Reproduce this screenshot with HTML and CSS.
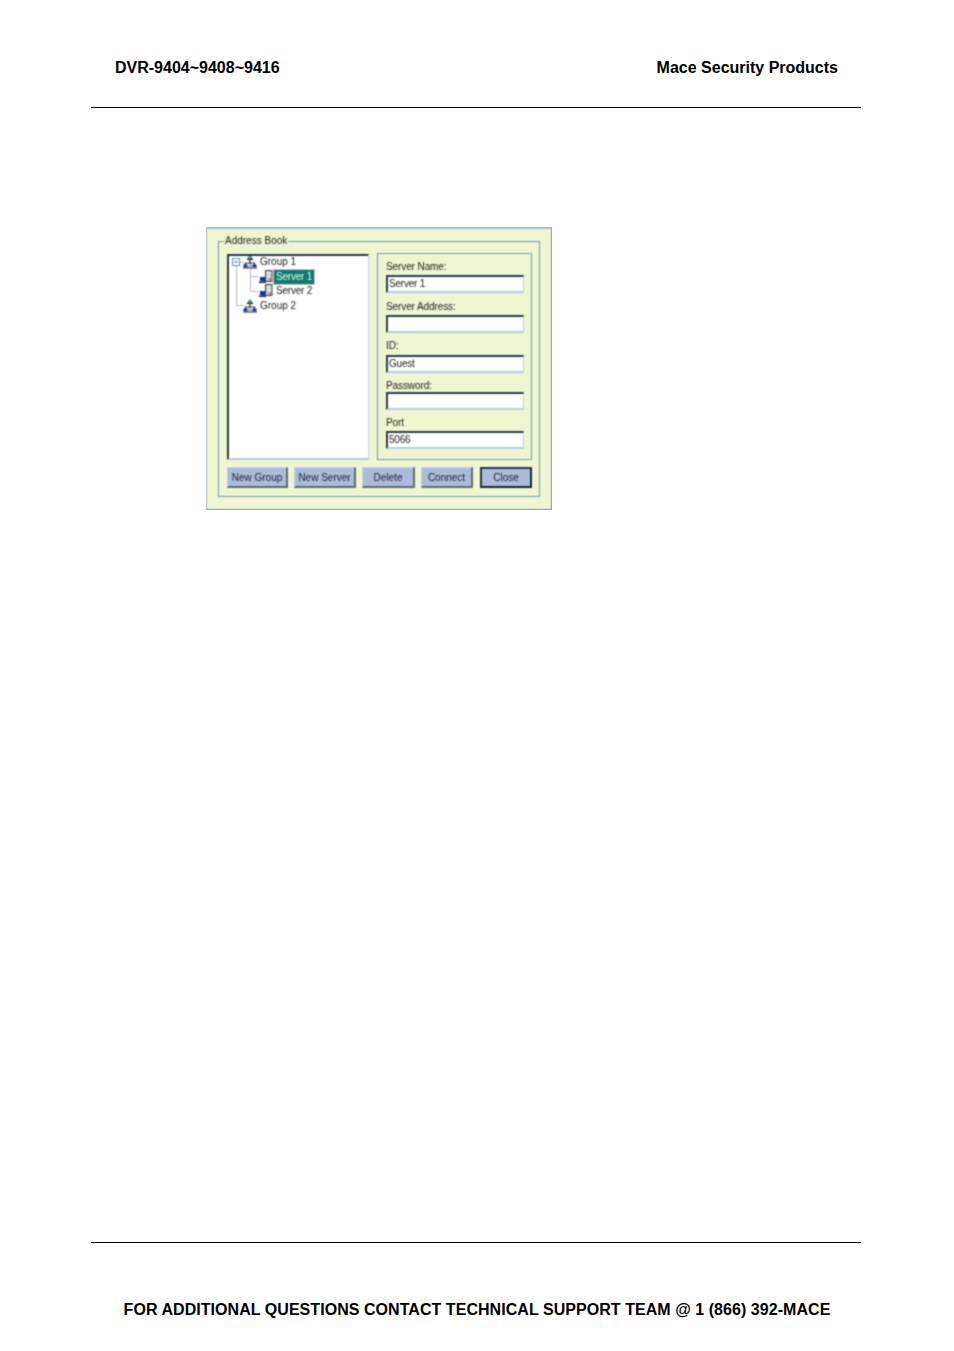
FILE: index.html
```html
<!DOCTYPE html>
<html lang="en">
<head>
<meta charset="utf-8">
<title>DVR-9404~9408~9416</title>
<link rel="stylesheet" href="styles.css">
</head>
<body>
<div class="page">
  <header class="head">
    <span>DVR-9404~9408~9416</span>
    <span>Mace Security Products</span>
  </header>
  <main class="content">
    <div class="dialog">
      <fieldset class="group">
        <legend class="legend">Address Book</legend>
        <div class="panes">
          <div class="tree">
            <svg class="lines" width="40" height="60" viewBox="0 0 40 60">
              <path d="M7.5 10V49.500H15M21.500 12V35.500H30M21.500 20.500H30M11 6.500H15" fill="none" stroke="#a4bbdc" stroke-width="1"/>
              <rect x="3.500" y="2.500" width="7" height="7" fill="#fff" stroke="#6a8cc0"/>
              <path d="M5 6H9" stroke="#3a5c90"/>
            </svg>
            <div class="row lvl1 first">
              <svg class="ico" viewBox="0 0 14 14"><use href="#net"/></svg><span class="lbl">Group 1</span>
            </div>
            <div class="row lvl2">
              <svg class="ico" viewBox="0 0 14 14"><use href="#srv"/></svg><span class="lbl sel">Server 1</span>
            </div>
            <div class="row lvl2">
              <svg class="ico" viewBox="0 0 14 14"><use href="#srv"/></svg><span class="lbl">Server 2</span>
            </div>
            <div class="row lvl1">
              <svg class="ico" viewBox="0 0 14 14"><use href="#net"/></svg><span class="lbl">Group 2</span>
            </div>
          </div>
          <div class="form">
            <label class="field f1">Server Name:<span class="input">Server 1</span></label>
            <label class="field f2">Server Address:<span class="input"></span></label>
            <label class="field f3">ID:<span class="input">Guest</span></label>
            <label class="field f4">Password:<span class="input"></span></label>
            <label class="field f5">Port<span class="input">5066</span></label>
          </div>
        </div>
        <div class="buttons">
          <button class="btn b1">New Group</button>
          <button class="btn b2">New Server</button>
          <button class="btn b3">Delete</button>
          <button class="btn b4">Connect</button>
          <button class="btn b5 default">Close</button>
        </div>
      </fieldset>
    </div>
  </main>
  <footer class="foot">FOR ADDITIONAL QUESTIONS CONTACT TECHNICAL SUPPORT TEAM @ 1 (866) 392-MACE</footer>
</div>
<svg class="defs" width="0" height="0">
  <defs>
    <filter id="soft" x="0" y="0" width="100%" height="100%" color-interpolation-filters="sRGB">
      <feConvolveMatrix order="3" kernelMatrix="1 2 1 2 6 2 1 2 1" divisor="18" preserveAlpha="true"/>
    </filter>
    <g id="net">
      <path d="M7 0L10.500 5H3.500Z" fill="#26303c"/>
      <rect x="6" y="1.500" width="2" height="2.500" fill="#35c0b0"/>
      <path d="M7 5V9M2.500 10V8H11.500V10" fill="none" stroke="#26303c" stroke-width="1.200"/>
      <rect x="0.500" y="9.500" width="4" height="3" fill="#1a2ab8"/>
      <rect x="5" y="9.500" width="4" height="3" fill="#aeb6c8"/>
      <rect x="9.500" y="9.500" width="4" height="3" fill="#1a2ab8"/>
      <rect x="0" y="12.500" width="14" height="1" fill="#26303c"/>
    </g>
    <g id="srv">
      <rect x="6.500" y="0.500" width="6.500" height="11" fill="#c4cad4" stroke="#3a4450" stroke-width="1"/>
      <rect x="8.500" y="2.500" width="3" height="1.500" fill="#f4f6fa"/>
      <rect x="8.500" y="5.500" width="3" height="1.500" fill="#f4f6fa"/>
      <rect x="10" y="8.500" width="2" height="2" fill="#c05a5a"/>
      <rect x="1" y="7" width="5" height="4.500" fill="#1a2ab8"/>
      <rect x="0" y="11.500" width="7" height="1.500" fill="#20283a"/>
    </g>
  </defs>
</svg>
</body>
</html>
```

FILE: styles.css
```css
html, body {
  margin: 0;
  padding: 0;
  background: #fff;
}
.page {
  width: 954px;
  height: 1351px;
  display: flex;
  flex-direction: column;
  font-family: "Liberation Sans", Arial, sans-serif;
  color: #000;
}
.head {
  margin-left: 91px;
  width: 770px;
  box-sizing: border-box;
  height: 108px;
  padding: 59px 23px 0 24px;
  display: flex;
  justify-content: space-between;
  font-size: 16px;
  line-height: 18px;
  font-weight: 700;
  border-bottom: 1px solid #000;
}
.content {
  flex: 1;
  padding: 119px 0 0 206px;
}
.foot {
  margin-left: 91px;
  width: 770px;
  box-sizing: border-box;
  height: 109px;
  border-top: 1px solid #000;
  padding: 58px 0 0 2px;
  text-align: center;
  font-size: 16px;
  line-height: 18px;
  font-weight: 700;
  letter-spacing: 0.05px;
}
.defs {
  position: absolute;
}
.dialog {
  width: 346px;
  height: 283px;
  box-sizing: border-box;
  background: #eef5d0;
  border: 1px solid #a4bbdc;
  border-top-width: 2px;
  border-bottom-color: #7f9ac4;
  border-right-color: #7f9ac4;
  padding: 6px 11px 0;
  filter: url(#soft);
  font-size: 10px;
  color: #5a5a5a;
}
.group {
  margin: 0;
  width: 322px;
  height: 262px;
  box-sizing: border-box;
  border: 1px solid #7496c8;
  padding: 6px 7px 0 8px;
  min-width: 0;
}
.legend {
  padding: 0 1px;
  margin-left: -3px;
  line-height: 12px;
  color: #222;
}
.panes {
  display: flex;
  justify-content: space-between;
  height: 207px;
}
.tree {
  position: relative;
  width: 142px;
  margin-top: 1px;
  box-sizing: border-box;
  background: #fff;
  border-top: 2px solid #2a3648;
  border-left: 2px solid #2a3648;
  border-right: 1px solid #c8d6ea;
  border-bottom: 2px solid #b8cae4;
}
.lines {
  position: absolute;
  left: 0;
  top: 0;
}
.row {
  position: relative;
  display: flex;
  align-items: center;
  height: 14.500px;
  gap: 1px;
}
.first {
  margin-top: -1px;
}
.lvl1 {
  padding-left: 14px;
}
.lvl2 {
  padding-left: 30px;
  letter-spacing: -0.2px;
}
.ico {
  width: 14px;
  height: 14px;
  flex: none;
}
.lbl {
  padding: 0 2px;
  line-height: 12px;
  color: #222;
}
.sel {
  padding: 1px 2px;
  background: #0a7a72;
  color: #e8fbf6;
  outline: 1px solid #e2b8b8;
}
.form {
  width: 155px;
  box-sizing: border-box;
  border: 1px solid #7496c8;
  padding: 7px 8px 0;
  display: flex;
  flex-direction: column;
}
.field {
  display: flex;
  flex-direction: column;
  line-height: 12px;
  color: #222;
  letter-spacing: -0.1px;
  margin-bottom: 7px;
}
.f1 {
  margin-bottom: 8px;
}
.input {
  display: block;
  box-sizing: border-box;
  width: 138px;
  height: 18px;
  margin-top: 2px;
  background: #fff;
  border-top: 2px solid #2a3a50;
  border-left: 2px solid #2a3a50;
  border-right: 1px solid #c0d0e8;
  border-bottom: 2px solid #b8cae4;
  padding-left: 1px;
  line-height: 14px;
  letter-spacing: -0.2px;
}
.f3 .input {
  margin-top: 3px;
}
.f4 .input {
  margin-top: 0;
}
.buttons {
  display: flex;
  gap: 6px;
  margin-top: 7px;
}
.btn {
  height: 21px;
  box-sizing: border-box;
  padding: 0;
  background: #a9bcdc;
  border-top: 1px solid #c6d3e8;
  border-left: 1px solid #c6d3e8;
  border-right: 2px solid #5f6f68;
  border-bottom: 2px solid #5f6f68;
  font-family: inherit;
  font-size: 10px;
  color: #20242e;
}
.b1 { width: 61px; }
.b2 { width: 62px; }
.b3 { width: 53px; }
.b4 { width: 52px; margin-right: 1px; }
.b5 { width: 52px; }
.default {
  border: 2px solid #1c2430;
  border-top-color: #2a3648;
  border-left-color: #2a3648;
}
```
